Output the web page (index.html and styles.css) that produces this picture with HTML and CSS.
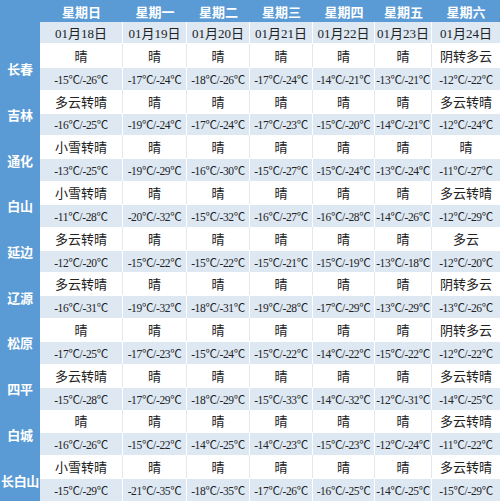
FILE: index.html
```html
<!DOCTYPE html>
<html lang="zh">
<head>
<meta charset="utf-8">
<title>吉林省一周天气预报</title>
<link rel="stylesheet" href="styles.css">
</head>
<body>
<table class="wx">
<colgroup>
<col class="c0"><col class="c1"><col class="c2"><col class="c3"><col class="c4"><col class="c5"><col class="c6"><col class="c7">
</colgroup>
<tr class="days">
<th class="city" rowspan="2"></th>
<th>星期日</th><th>星期一</th><th>星期二</th><th>星期三</th><th>星期四</th><th>星期五</th><th>星期六</th>
</tr>
<tr class="dates">
<td>01月18日</td><td>01月19日</td><td>01月20日</td><td>01月21日</td><td>01月22日</td><td>01月23日</td><td>01月24日</td>
</tr>

<tr class="sky"><th class="city" rowspan="2">长春</th><td>晴</td><td>晴</td><td>晴</td><td>晴</td><td>晴</td><td>晴</td><td>阴转多云</td></tr>
<tr class="temp"><td>-15℃/-26℃</td><td>-17℃/-24℃</td><td>-18℃/-26℃</td><td>-17℃/-24℃</td><td>-14℃/-21℃</td><td>-13℃/-21℃</td><td>-12℃/-22℃</td></tr>

<tr class="sky"><th class="city" rowspan="2">吉林</th><td>多云转晴</td><td>晴</td><td>晴</td><td>晴</td><td>晴</td><td>晴</td><td>多云转晴</td></tr>
<tr class="temp"><td>-16℃/-25℃</td><td>-19℃/-24℃</td><td>-17℃/-24℃</td><td>-17℃/-23℃</td><td>-15℃/-20℃</td><td>-14℃/-21℃</td><td>-12℃/-24℃</td></tr>

<tr class="sky"><th class="city" rowspan="2">通化</th><td>小雪转晴</td><td>晴</td><td>晴</td><td>晴</td><td>晴</td><td>晴</td><td>晴</td></tr>
<tr class="temp"><td>-13℃/-25℃</td><td>-19℃/-29℃</td><td>-16℃/-30℃</td><td>-15℃/-27℃</td><td>-15℃/-24℃</td><td>-13℃/-24℃</td><td>-11℃/-27℃</td></tr>

<tr class="sky"><th class="city" rowspan="2">白山</th><td>小雪转晴</td><td>晴</td><td>晴</td><td>晴</td><td>晴</td><td>晴</td><td>多云转晴</td></tr>
<tr class="temp"><td>-11℃/-28℃</td><td>-20℃/-32℃</td><td>-15℃/-32℃</td><td>-16℃/-27℃</td><td>-16℃/-28℃</td><td>-14℃/-26℃</td><td>-12℃/-29℃</td></tr>

<tr class="sky"><th class="city" rowspan="2">延边</th><td>多云转晴</td><td>晴</td><td>晴</td><td>晴</td><td>晴</td><td>晴</td><td>多云</td></tr>
<tr class="temp"><td>-12℃/-20℃</td><td>-15℃/-22℃</td><td>-15℃/-22℃</td><td>-15℃/-21℃</td><td>-15℃/-19℃</td><td>-13℃/-18℃</td><td>-12℃/-20℃</td></tr>

<tr class="sky"><th class="city" rowspan="2">辽源</th><td>多云转晴</td><td>晴</td><td>晴</td><td>晴</td><td>晴</td><td>晴</td><td>阴转多云</td></tr>
<tr class="temp"><td>-16℃/-31℃</td><td>-19℃/-32℃</td><td>-18℃/-31℃</td><td>-19℃/-28℃</td><td>-17℃/-29℃</td><td>-13℃/-29℃</td><td>-13℃/-26℃</td></tr>

<tr class="sky"><th class="city" rowspan="2">松原</th><td>晴</td><td>晴</td><td>晴</td><td>晴</td><td>晴</td><td>晴</td><td>阴转多云</td></tr>
<tr class="temp"><td>-17℃/-25℃</td><td>-17℃/-23℃</td><td>-15℃/-24℃</td><td>-15℃/-22℃</td><td>-14℃/-22℃</td><td>-15℃/-22℃</td><td>-12℃/-22℃</td></tr>

<tr class="sky"><th class="city" rowspan="2">四平</th><td>多云转晴</td><td>晴</td><td>晴</td><td>晴</td><td>晴</td><td>晴</td><td>多云转晴</td></tr>
<tr class="temp"><td>-15℃/-28℃</td><td>-17℃/-29℃</td><td>-18℃/-29℃</td><td>-15℃/-33℃</td><td>-14℃/-32℃</td><td>-12℃/-31℃</td><td>-14℃/-25℃</td></tr>

<tr class="sky"><th class="city" rowspan="2">白城</th><td>晴</td><td>晴</td><td>晴</td><td>晴</td><td>晴</td><td>晴</td><td>多云转晴</td></tr>
<tr class="temp"><td>-16℃/-26℃</td><td>-15℃/-22℃</td><td>-14℃/-25℃</td><td>-14℃/-23℃</td><td>-15℃/-23℃</td><td>-12℃/-24℃</td><td>-11℃/-22℃</td></tr>

<tr class="sky"><th class="city" rowspan="2">长白山</th><td>小雪转晴</td><td>晴</td><td>晴</td><td>晴</td><td>晴</td><td>晴</td><td>多云转晴</td></tr>
<tr class="temp"><td>-15℃/-29℃</td><td>-21℃/-35℃</td><td>-18℃/-35℃</td><td>-17℃/-26℃</td><td>-16℃/-25℃</td><td>-14℃/-25℃</td><td>-15℃/-29℃</td></tr>
</table>
</body>
</html>
```

FILE: styles.css
```css
html, body {
  margin: 0;
  padding: 0;
  background: #5b9bd5;
}

.wx {
  width: 500px;
  table-layout: fixed;
  border-collapse: separate;
  border-spacing: 0;
  font-family: "Liberation Serif", "Noto Sans CJK SC", serif;
  font-size: 13px;
  color: #222;
}

.c0 { width: 40px; }
.c1 { width: 83px; }
.c2 { width: 64px; }
.c3 { width: 63px; }
.c4 { width: 63px; }
.c5 { width: 62px; }
.c6 { width: 57px; }
.c7 { width: 68px; }

.wx th,
.wx td {
  padding: 0;
  text-align: center;
  vertical-align: middle;
  white-space: nowrap;
  box-sizing: border-box;
}

.days th {
  height: 22px;
  color: #fff;
  font-weight: bold;
  font-size: 13px;
  background: #5b9bd5;
}

.wx th.city {
  background: #5b9bd5;
  color: #fff;
  font-weight: bold;
  font-size: 13px;
  font-family: "Noto Sans CJK SC", sans-serif;
  padding-top: 4px;
  letter-spacing: -0.3px;
}

.dates td {
  height: 22px;
  background: #dde8f3;
  border-right: 1px solid #fff;
  border-bottom: 1px solid #fff;
}

.sky td {
  height: 22.85px;
  background: #fff;
  border-right: 1px solid #e2e8ef;
}

.temp td {
  height: 22.85px;
  background: #dde8f3;
  border-right: 1px solid #fff;
  border-top: 1px solid #fff;
  font-size: 11.5px;
  letter-spacing: -0.35px;
}

.sky td:last-child,
.temp td:last-child,
.dates td:last-child {
  border-right: none;
}
```
